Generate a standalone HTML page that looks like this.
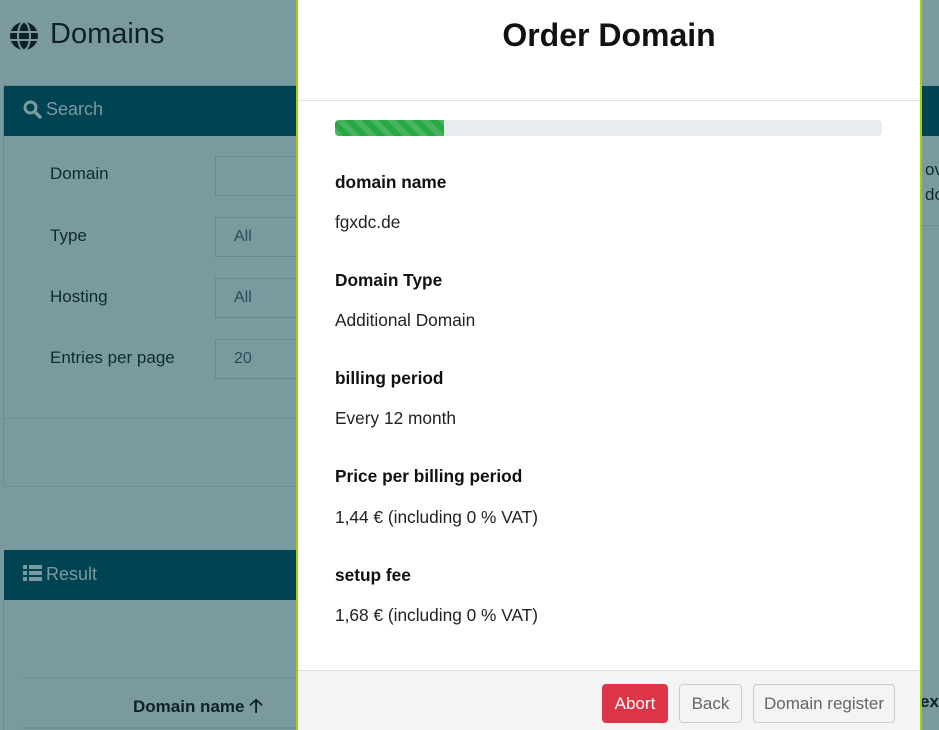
<!DOCTYPE html>
<html><head><style>
*{box-sizing:border-box;margin:0;padding:0}
body{width:939px;height:730px;overflow:hidden;position:relative;font-family:"Liberation Sans",sans-serif;background:#7b9aa0;color:#0e2226}
.abs{position:absolute}
.bar{background:#004352;color:#7b9aa0;font-size:18px}
.lbl{font-size:17px;color:#0e2a30}
.inp{border:1px solid #6a878d;height:40px;width:100px;font-size:16px;color:#2d4a55;padding:10px 18px}
.modal{position:absolute;left:296px;top:0;width:626px;height:730px;background:#fff;border-left:2px solid #9fd400;border-right:2px solid #9fd400}
.h{font-weight:bold;font-size:17.3px;color:#111;position:absolute;left:37px}
.v{font-size:17.3px;color:#222;position:absolute;left:37px}
.btn{position:absolute;top:684px;height:39px;border-radius:4px;font-size:17px;display:flex;align-items:center;justify-content:center}
</style></head><body>
<svg class="abs" style="left:9px;top:21px" width="30" height="30" viewBox="0 0 30 30"><circle cx="15" cy="15" r="14" fill="#0e2226"/><g stroke="#7b9aa0" stroke-width="2" fill="none"><ellipse cx="15" cy="15" rx="6" ry="14"/><line x1="1" y1="11" x2="29" y2="11"/><line x1="1" y1="19" x2="29" y2="19"/></g></svg>
<div class="abs" style="left:50px;top:18px;font-size:29px;color:#0e2226">Domains</div>
<div class="abs" style="left:3px;top:85px;width:300px;height:402px;border:1px solid #6d8c92"></div>
<div class="abs bar" style="left:4px;top:86px;width:300px;height:50px"></div>
<svg class="abs" style="left:23px;top:100px" width="19" height="19" viewBox="0 0 19 19"><circle cx="7.5" cy="7.5" r="5.5" stroke="#7b9aa0" stroke-width="3" fill="none"/><line x1="11.5" y1="11.5" x2="17" y2="17" stroke="#7b9aa0" stroke-width="3.5" stroke-linecap="round"/></svg>
<div class="abs" style="left:46px;top:99px;font-size:18px;color:#7b9aa0">Search</div>
<div class="abs lbl" style="left:50px;top:164px">Domain</div>
<div class="abs inp" style="left:215px;top:156px"></div>
<div class="abs lbl" style="left:50px;top:226px">Type</div>
<div class="abs inp" style="left:215px;top:217px">All</div>
<div class="abs lbl" style="left:50px;top:287px">Hosting</div>
<div class="abs inp" style="left:215px;top:278px">All</div>
<div class="abs lbl" style="left:50px;top:348px">Entries per page</div>
<div class="abs inp" style="left:215px;top:339px">20</div>
<div class="abs" style="left:4px;top:418px;width:300px;border-top:1px solid #6d8c92"></div>
<div class="abs bar" style="left:4px;top:550px;width:300px;height:50px"></div>
<svg class="abs" style="left:23px;top:565px" width="19" height="16" viewBox="0 0 19 16"><g fill="#7b9aa0"><rect x="0" y="0" width="4" height="4"/><rect x="0" y="6" width="4" height="4"/><rect x="0" y="12" width="4" height="4"/><rect x="6" y="0" width="13" height="4"/><rect x="6" y="6" width="13" height="4"/><rect x="6" y="12" width="13" height="4"/></g></svg>
<div class="abs" style="left:46px;top:564px;font-size:18px;color:#7b9aa0">Result</div>
<div class="abs" style="left:3px;top:600px;height:130px;border-left:1px solid #6d8c92"></div>
<div class="abs" style="left:23px;top:677px;width:280px;border-top:1px solid #6d8c92"></div>
<div class="abs" style="left:23px;top:727px;width:280px;border-top:2px solid #6d8c92"></div>
<div class="abs" style="left:133px;top:692px;font-size:17px;font-weight:bold;color:#0e2226">Domain name <span style="font-size:19px">🡡</span></div>
<div class="abs bar" style="left:920px;top:86px;width:19px;height:50px"></div>
<div class="abs" style="left:925px;top:157px;font-size:17px;color:#0e2a30;line-height:25px">ov<br>do</div>
<div class="abs" style="left:920px;top:225px;width:19px;border-top:1px solid #6d8c92"></div>
<div class="abs" style="left:920px;top:692px;font-size:17px;font-weight:bold;color:#0e2226">ex</div>
<div class="modal">
<div class="abs" style="left:0;width:622px;top:17px;text-align:center;font-size:32px;font-weight:bold;color:#111">Order Domain</div>
<div class="abs" style="left:0;top:100px;width:622px;border-top:1px solid #e2e2e2"></div>
<div class="abs" style="left:37px;top:120px;width:547px;height:16px;background:#e9ecef;border-radius:4px;overflow:hidden"><div style="width:109px;height:16px;background:#28a745 repeating-linear-gradient(45deg,rgba(255,255,255,.15) 0 6px,transparent 6px 12px)"></div></div>
<div class="h" style="top:172px">domain name</div>
<div class="v" style="top:212px">fgxdc.de</div>
<div class="h" style="top:270px">Domain Type</div>
<div class="v" style="top:310px">Additional Domain</div>
<div class="h" style="top:368px">billing period</div>
<div class="v" style="top:408px">Every 12 month</div>
<div class="h" style="top:466px">Price per billing period</div>
<div class="v" style="top:507px">1,44 € (including 0 % VAT)</div>
<div class="h" style="top:565px">setup fee</div>
<div class="v" style="top:605px">1,68 € (including 0 % VAT)</div>
<div class="abs" style="left:0;top:670px;width:622px;height:60px;background:#f4f4f4;border-top:1px solid #ddd"></div>
</div>
<div class="btn" style="left:602px;width:66px;background:#dc3545;color:#fff">Abort</div>
<div class="btn" style="left:679px;width:63px;border:1px solid #ccc;color:#666;background:#f4f4f4">Back</div>
<div class="btn" style="left:753px;width:142px;border:1px solid #ccc;color:#666;background:#f4f4f4">Domain register</div>
</body></html>
